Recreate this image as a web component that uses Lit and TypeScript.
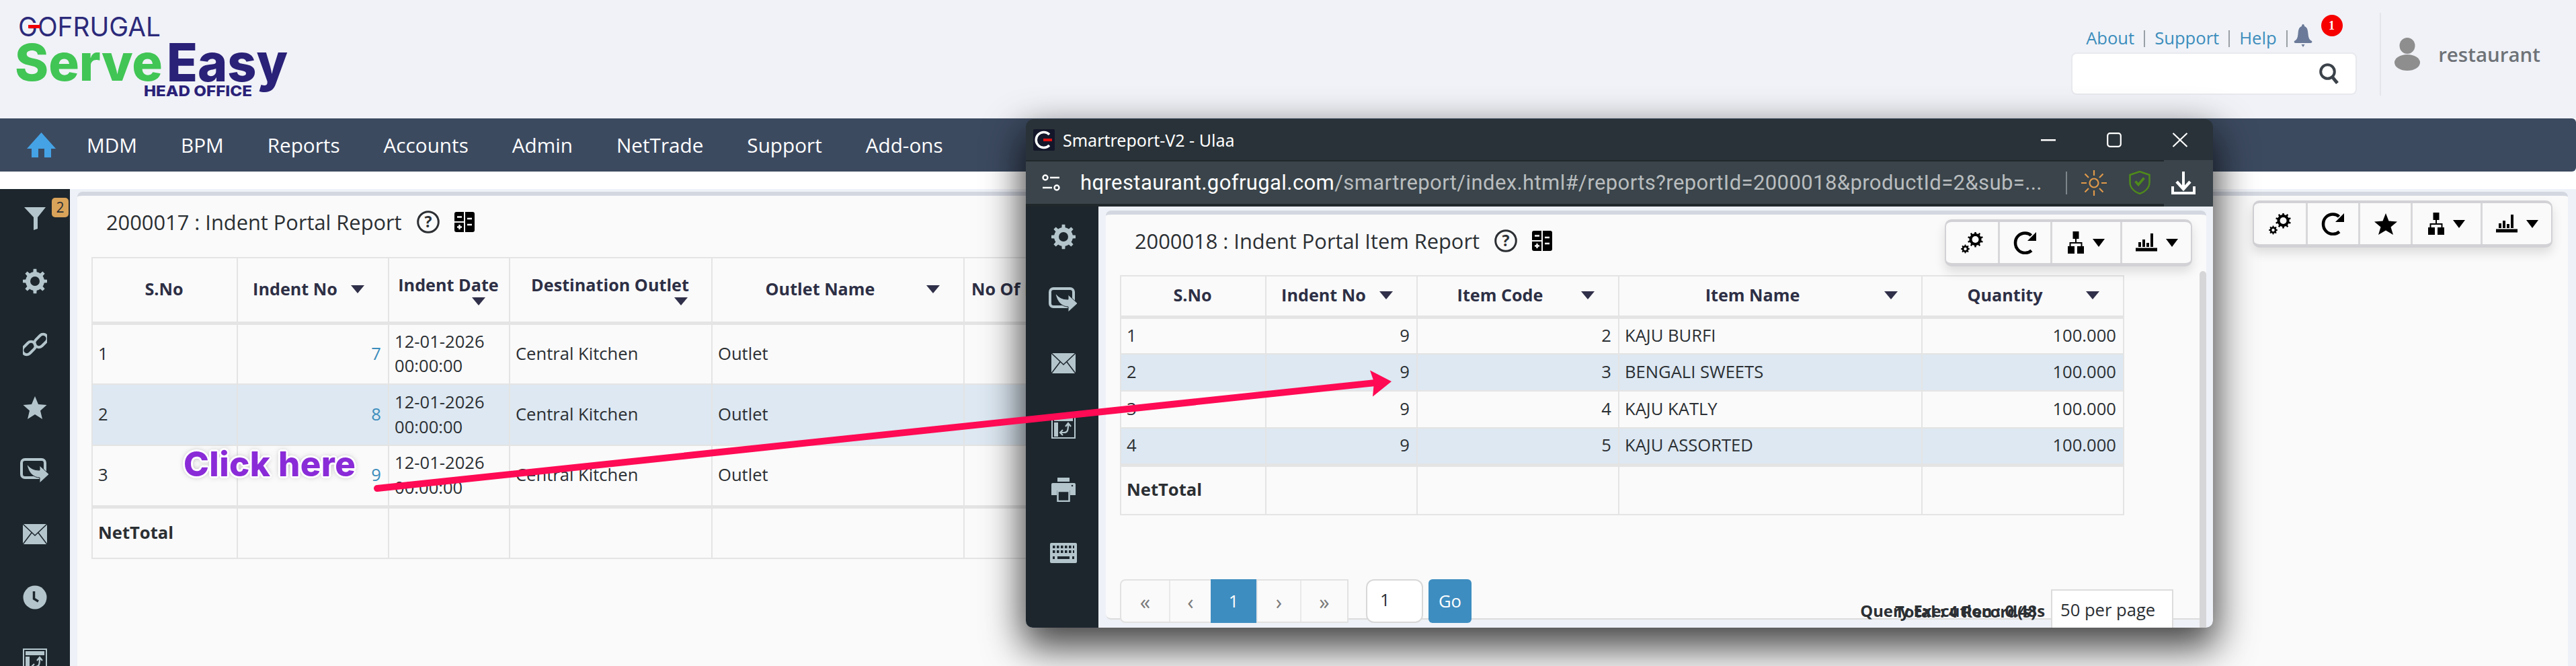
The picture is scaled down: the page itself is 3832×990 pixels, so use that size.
import { LitElement, html, css } from "lit";
import { customElement } from "lit/decorators.js";

const gear = (cx: number, cy: number, ro: number, ri: number, n: number) => {
  let d = "";
  const step = (Math.PI * 2) / n;
  for (let i = 0; i < n; i++) {
    const a = i * step - Math.PI / 2;
    const pts: [number, number][] = [
      [ri, a - step * 0.5],
      [ri, a - step * 0.24],
      [ro, a - step * 0.16],
      [ro, a + step * 0.16],
      [ri, a + step * 0.24],
    ];
    for (const [r, t] of pts) {
      d += `${i === 0 && t === a - step * 0.5 ? "M" : "L"}${(cx + r * Math.cos(t)).toFixed(2)} ${(cy + r * Math.sin(t)).toFixed(2)}`;
    }
  }
  return d + "Z";
};

const DARK = "#1d262d";
const IC = "#b4c6cc";

const icons: Record<string, unknown> = {
  filter: html`<svg width="34" height="36" viewBox="0 0 34 36"><path d="M1 2H33L21 17V34L15 36V17Z" fill="${IC}"/></svg>`,
  gear: html`<svg width="36" height="38" viewBox="0 0 36 38"><path d="${gear(18, 19, 18.5, 14, 8)}" fill="${IC}"/><circle cx="18" cy="19" r="7" fill="${DARK}"/></svg>`,
  link: html`<svg width="36" height="38" viewBox="0 0 36 38" fill="none" stroke="${IC}" stroke-width="4"><rect x="-2" y="18" width="22" height="13" rx="6.5" transform="rotate(-45 9 24.5)"/><rect x="16" y="7" width="22" height="13" rx="6.5" transform="rotate(-45 27 13.5)"/></svg>`,
  star: html`<svg width="36" height="36" viewBox="0 0 36 36"><path d="M18 1L23 13L35.500 14L26 22.500L29 35L18 28L7 35L10 22.500L.5 14L13 13Z" fill="${IC}"/></svg>`,
  share: html`<svg width="44" height="38" viewBox="0 0 44 38"><rect x="2" y="2" width="35" height="27" rx="5" fill="none" stroke="${IC}" stroke-width="4"/><path d="M10 9C15 15 20 18 29 18V11L43 24L29 37V29C20 29 12 22 10 9Z" fill="${IC}" stroke="${DARK}" stroke-width="1"/></svg>`,
  mail: html`<svg width="36" height="30" viewBox="0 0 36 30"><rect width="36" height="30" fill="${IC}"/><path d="M0 0L18 17L36 0M0 30L13 13M36 30L23 13" fill="none" stroke="${DARK}" stroke-width="1.600"/></svg>`,
  clock: html`<svg width="36" height="36" viewBox="0 0 36 36"><circle cx="18" cy="18" r="17.500" fill="${IC}"/><path d="M16.500 9V20L23 24" fill="none" stroke="${DARK}" stroke-width="3.500"/></svg>`,
  chart: html`<svg width="36" height="36" viewBox="0 0 36 36"><rect x="1" y="1" width="34" height="34" fill="none" stroke="${IC}" stroke-width="2"/><rect x="4" y="4" width="28" height="6" fill="${IC}"/><rect x="4" y="12" width="6" height="21" fill="${IC}"/><path d="M14 27H19C24 27 25 24 25 14M21 18L25 13L29 18M17 23L13 27L17 31" fill="none" stroke="${IC}" stroke-width="2.200"/></svg>`,
  print: html`<svg width="36" height="36" viewBox="0 0 36 36"><rect x="9" y="0" width="18" height="6" fill="${IC}"/><path d="M2 8H34Q36 8 36 10V26H28V19H8V26H0V10Q0 8 2 8Z" fill="${IC}"/><rect x="9.500" y="20" width="17" height="15" fill="${DARK}" stroke="${IC}" stroke-width="2.500"/><circle cx="31" cy="12" r="1.300" fill="${DARK}"/></svg>`,
  keyboard: html`<svg width="40" height="30" viewBox="0 0 40 30"><rect width="40" height="30" rx="2" fill="${IC}"/><path d="M4 6H36M4 13H36" stroke="${DARK}" stroke-width="4" stroke-dasharray="3.500 2.500"/><path d="M11 22H29" stroke="${DARK}" stroke-width="4"/><path d="M4 22H7M33 22H36" stroke="${DARK}" stroke-width="4"/></svg>`,
};

const toolIcons: Record<string, unknown> = {
  gears: html`<svg width="34" height="32" viewBox="0 0 34 32"><path fill-rule="evenodd" d="${gear(21.500, 11, 11.500, 9, 10)}" fill="#000"/><circle cx="21.500" cy="11" r="5" fill="#fafafa"/><path d="${gear(6.500, 25, 6.500, 5, 8)}" fill="#000"/><circle cx="6.500" cy="25" r="2.200" fill="#fafafa"/></svg>`,
  refresh: html`<svg width="36" height="34" viewBox="0 0 36 34"><path d="M27 28.500C24 31 21 32 17.500 32C9 32 3 25 3 17S9 2.500 17.500 2.500C21 2.500 24 3.500 26.500 6" fill="none" stroke="#000" stroke-width="4.500"/><path d="M34 1V14H21Z" fill="#000"/></svg>`,
  star: html`<svg width="34" height="32" viewBox="0 0 34 32"><path d="M17 0L21.500 11.500L34 12.500L24.500 20.500L28 32L17 25.500L6 32L9.500 20.500L0 12.500L12.500 11.500Z" fill="#000"/></svg>`,
  tree: html`<svg width="24" height="33" viewBox="0 0 24 33"><rect x="7.500" y="0" width="9" height="11" fill="#000"/><path d="M12 11V17M3.500 23V17H20.500V23" fill="none" stroke="#000" stroke-width="2"/><rect x="0" y="22" width="10" height="11" fill="#000"/><rect x="14" y="22" width="10" height="11" fill="#000"/></svg>`,
  bars: html`<svg width="32" height="27" viewBox="0 0 32 27"><path d="M0 24H32" stroke="#000" stroke-width="5"/><rect x="4" y="13" width="4" height="7" fill="#000"/><rect x="10" y="9" width="4" height="11" fill="#000"/><rect x="16" y="14" width="4" height="6" fill="#000"/><rect x="22" y="0" width="4" height="20" fill="#000"/></svg>`,
};

const helpIcon = html`<svg width="34" height="34" viewBox="0 0 34 34"><circle cx="17" cy="17" r="15.300" fill="none" stroke="#2c2f33" stroke-width="3"/><text x="17" y="25" text-anchor="middle" font-family="Open Sans" font-weight="700" font-size="23" fill="#2c2f33">?</text></svg>`;
const calcIcon = html`<svg width="30" height="30" viewBox="0 0 30 30"><rect width="30" height="30" rx="3" fill="#000"/><path d="M15 0V30M0 15H14" stroke="#fafafa" stroke-width="2"/><path d="M4 7.500H11M19 10H26M19 19H26M4 22.500H11M7.500 19V26" stroke="#fafafa" stroke-width="2.400"/></svg>`;

type Col = { w: number; label: string; caret?: boolean; left?: boolean };
const mainCols: Col[] = [
  { w: 216, label: "S.No" },
  { w: 225, label: "Indent No", caret: true },
  { w: 180, label: "Indent Date", caret: true },
  { w: 301, label: "Destination Outlet", caret: true },
  { w: 375, label: "Outlet Name", caret: true },
  { w: 300, label: "No Of Items", left: true },
];
const popCols: Col[] = [
  { w: 216, label: "S.No" },
  { w: 225, label: "Indent No", caret: true },
  { w: 300, label: "Item Code", caret: true },
  { w: 451, label: "Item Name", caret: true },
  { w: 300, label: "Quantity", caret: true },
];
const mainRows = [7, 8, 9];
const popRows = [
  [1, 9, 2, "KAJU BURFI", "100.000"],
  [2, 9, 3, "BENGALI SWEETS", "100.000"],
  [3, 9, 4, "KAJU KATLY", "100.000"],
  [4, 9, 5, "KAJU ASSORTED", "100.000"],
];

@customElement("app-root")
export class AppRoot extends LitElement {
  static styles = css`
    :host {
      display: block;
      position: relative;
      width: 3832px;
      height: 990px;
      overflow: hidden;
      background: #fff;
      font-family: "Open Sans", "Noto Sans", sans-serif;
      font-size: 25.6px;
      color: #2b2f33;
    }
    .top {
      height: 176px;
      background: #f0f2f7;
      display: flex;
      justify-content: space-between;
    }
    .logo { display: block; }
    .top-right { display: flex; padding-right: 53px; }
    .tools { width: 425px; padding-top: 36px; }
    .links {
      display: flex;
      align-items: center;
      height: 42px;
      padding-left: 22px;
      position: relative;
      color: #3c8dbc;
      line-height: 36px;
    }
    .links i { width: 2px; height: 25px; background: #9aa0a6; margin: 0 14px; }
    .links i:nth-of-type(3) { margin-right: 9px; }
    .bell { position: relative; display: flex; margin-top: -8px; }
    .bell-badge {
      position: absolute;
      left: 41px;
      top: -14px;
      width: 32px;
      height: 32px;
      border-radius: 50%;
      background: #f60000;
      color: #fff;
      font: 700 18px "Liberation Serif", serif;
      display: flex;
      align-items: center;
      justify-content: center;
    }
    .search {
      height: 63px;
      box-sizing: border-box;
      background: #fff;
      border: 2px solid #e8e9ee;
      border-radius: 8px;
      display: flex;
      align-items: center;
      justify-content: flex-end;
      padding-right: 24px;
    }
    .user {
      margin: 19px 0 34px 34px;
      border-left: 2px solid #e3e5ea;
      padding-left: 20px;
      display: flex;
      align-items: center;
      gap: 27px;
      font-size: 29.500px;
      font-weight: 600;
      color: #6e7277;
    }
    .nav {
      height: 79px;
      background: #3c4a60;
      border-radius: 0 6px 6px 0;
      display: flex;
      align-items: center;
      padding-left: 40px;
      color: #fff;
      font-size: 29.700px;
    }
    .nav svg { margin-right: 46px; }
    .nav span { margin-right: 65px; }
    .band { height: 26px; background: #fff; }
    .body { display: flex; height: 709px; }
    .side {
      width: 104px;
      flex: none;
      background: #1d262d;
      display: flex;
      flex-direction: column;
      gap: 8px;
    }
    .side-item {
      position: relative;
      height: 86px;
      flex: none;
      display: flex;
      align-items: center;
      justify-content: center;
    }
    .badge {
      position: absolute;
      left: 77px;
      top: 13px;
      width: 25px;
      height: 29px;
      background: #d9a35a;
      border-radius: 5px;
      color: #2b2f33;
      font-size: 21px;
      line-height: 29px;
      text-align: center;
    }
    .panel {
      flex: 1;
      min-width: 0;
      background: #eef1f7;
      padding: 4px 12px 0 11px;
      position: relative;
    }
    .card {
      background: #fafafa;
      border-top: 6px solid #d3d7e0;
      border-radius: 8px 8px 0 0;
      height: 800px;
      box-sizing: border-box;
      padding: 0 23px 0 21px;
    }
    .head {
      display: flex;
      justify-content: space-between;
      align-items: flex-start;
      height: 91px;
    }
    .title {
      display: flex;
      align-items: center;
      gap: 22px;
      padding: 17px 0 0 22px;
      font-size: 30.800px;
      line-height: 44px;
      color: #2b2f33;
    }
    .toolbar {
      margin-top: 7px;
      display: flex;
      height: 70px;
      box-sizing: border-box;
      background: #fafafa;
      border: 4px solid #d2d2d6;
      border-width: 4px 2px 5px 2px;
      border-radius: 10px;
      box-shadow: 0 8px 16px rgba(0, 0, 0, 0.12);
    }
    .tb {
      box-sizing: border-box;
      display: flex;
      align-items: center;
      justify-content: center;
      gap: 13px;
      border-left: 3px solid #d8d8db;
    }
    .tb:first-child { border-left: 0; }
    .w1 { width: 77px; }
    .w2 { width: 78px; }
    .w3 { width: 104px; }
    .w4 { width: 105px; }
    .caret {
      flex: none;
      width: 0;
      height: 0;
      border-left: 10px solid transparent;
      border-right: 10px solid transparent;
      border-top: 12px solid #30304a;
    }
    .tb .caret { border-top-color: #000; border-left-width: 9px; border-right-width: 9px; }
    table {
      border-collapse: collapse;
      table-layout: fixed;
      background: #fafafa;
    }
    th, td {
      border: 2px solid #e4e4e4;
      padding: 0 10px 0 8px;
      line-height: 36.600px;
      box-sizing: border-box;
      overflow: hidden;
    }
    td { white-space: nowrap; }
    td.wrap { white-space: normal; }
    th {
      font-weight: 700;
      color: #2d2f45;
      font-size: 25.200px;
      border-bottom-width: 5px;
      padding-bottom: 2px;
    }
    .thi {
      display: flex;
      flex-wrap: wrap;
      align-items: center;
      justify-content: flex-end;
    }
    .thi span { flex: 1 0 auto; text-align: center; }
    .thi.lft span { text-align: left; white-space: nowrap; padding-left: 2px; }
    .thi .caret { margin: 0 25px 0 6px; }
    .r { text-align: right; }
    .lnk { color: #3c8dbc; }
    .hl td { background: #dde8f2; }
    tfoot td { border-top-width: 5px; font-weight: 700; }
    .main-table th { height: 97px; }
    .main-table tbody tr { height: 91px; }
    .main-table tfoot tr { height: 77px; }
    .pop-table th { height: 61px; }
    .pop-table tbody tr { height: 55px; }
    .pop-table tfoot tr { height: 74px; }

    .window {
      position: absolute;
      left: 1526px;
      top: 177px;
      width: 1766px;
      height: 756px;
      background: #293238;
      border-radius: 12px 12px 10px 10px;
      overflow: hidden;
      display: flex;
      flex-direction: column;
    }
    .window-shadow {
      position: absolute;
      left: 1526px;
      top: 177px;
      width: 1766px;
      height: 756px;
      border-radius: 12px;
      box-shadow: 0 24px 56px 6px rgba(0, 0, 0, 0.72);
    }
    .w-title {
      height: 61px;
      flex: none;
      display: flex;
      align-items: center;
      padding-left: 11px;
      color: #fff;
      font-family: "Noto Sans", sans-serif;
      font-size: 25px;
      gap: 12px;
    }
    .w-ctrl { margin-left: auto; display: flex; align-items: center; gap: 0; }
    .w-ctrl div { width: 98px; display: flex; justify-content: center; }
    .w-url { height: 69px; flex: none; display: flex; background: #3a444a; }
    .url-main {
      flex: 1;
      box-sizing: border-box;
      border-top: 2px solid #20282c;
      border-bottom: 4px solid #20282c;
      display: flex;
      align-items: center;
      padding-left: 24px;
    }
    .url-text {
      margin-left: 30px;
      width: 1442px;
      flex: none;
      white-space: nowrap;
      font: 31px Roboto, sans-serif;
      color: #b9bdbf;
      letter-spacing: 0.4px;
    }
    .url-text b { color: #fff; font-weight: 400; }
    .url-sep { width: 2px; height: 34px; background: #7d868b; margin: 0 21px 0 24px; }
    .url-right { width: 73px; flex: none; display: flex; align-items: center; padding-left: 11px; box-sizing: border-box; }
    .w-body { flex: 1; min-height: 0; display: flex; background: #eef1f7; }
    .w-side {
      width: 108px;
      flex: none;
      background: #1d262d;
      display: flex;
      flex-direction: column;
      gap: 4px;
      padding-left: 4px;
      box-sizing: border-box;
    }
    .w-side .side-item { height: 90px; }
    .w-panel {
      flex: 1;
      min-width: 0;
      position: relative;
      padding: 6px 10px 0 11px;
    }
    .w-card {
      background: #fafafa;
      border-top: 6px solid #d3d7e0;
      border-bottom: 2px solid #dcdcdc;
      border-radius: 8px;
      height: 608px;
      box-sizing: border-box;
      padding: 0 21px 0 21px;
      position: relative;
    }
    .w-card .head { height: 90px; padding-right: 0; }
    .w-card .title { padding-left: 22px; }
    .scroll {
      position: absolute;
      right: 10px;
      top: 96px;
      bottom: 0;
      width: 10px;
      background: #d6d6d8;
      border-radius: 5px 5px 0 0;
    }
    .foot {
      display: flex;
      margin-top: 95px;
      position: relative;
    }
    .pager {
      display: flex;
      height: 65px;
      box-sizing: border-box;
      border: 2px solid #e2e2e2;
      border-radius: 8px 0 0 8px;
      background: #fafafa;
      color: #7b7b7b;
      font-size: 31px;
    }
    .pager div {
      display: flex;
      align-items: center;
      justify-content: center;
      border-left: 2px solid #e9e9e9;
      box-sizing: border-box;
    }
    .pager div:first-child { border-left: 0; }
    .pager .on { background: #3e8dc0; color: #fff; border: 0; margin: -2px 0; font-size: 25.6px; }
    .goto {
      width: 85px;
      height: 65px;
      box-sizing: border-box;
      margin-left: 26px;
      background: #fff;
      border: 2px solid #d8d8d8;
      border-radius: 12px;
      padding-left: 19px;
      line-height: 58px;
    }
    .go {
      width: 64px;
      height: 65px;
      margin-left: 8px;
      background: #3e8dc0;
      color: #fff;
      border-radius: 6px;
      display: flex;
      align-items: center;
      justify-content: center;
    }
    .stats {
      position: absolute;
      right: 219px;
      top: 29px;
      font-size: 23.800px;
      font-weight: 700;
      color: #2b2f33;
      white-space: nowrap;
      line-height: 36px;
    }
    .stats.two { right: 232px; top: 30px; }
    .sel {
      position: absolute;
      right: 28px;
      top: 15px;
      width: 182px;
      height: 80px;
      box-sizing: border-box;
      background: #fff;
      border: 2px solid #dcdcdc;
      padding: 11px 0 0 12px;
      line-height: 36px;
    }
    .overlay { position: absolute; left: 0; top: 0; pointer-events: none; }
    .click {
      position: absolute;
      left: 273px;
      top: 660px;
      font: 800 51px/60px Inter, sans-serif;
      letter-spacing: 0.4px;
      color: #8a2bd8;
      white-space: nowrap;
      text-shadow:
        2px 2px 0 #fff, -2px 2px 0 #fff, 2px -2px 0 #fff, -2px -2px 0 #fff,
        0 3px 0 #fff, 0 -3px 0 #fff, 3px 0 0 #fff, -3px 0 0 #fff,
        0 0 9px rgba(60, 60, 60, 0.55);
    }
  `;

  private table(cols: Col[], cls: string, body: unknown, footCells: number) {
    return html`<table class="${cls}" style="width:${cols.reduce((a, c) => a + c.w, 0)}px">
      <colgroup>${cols.map((c) => html`<col style="width:${c.w}px" />`)}</colgroup>
      <thead>
        <tr>
          ${cols.map(
            (c) => html`<th>
              <div class="thi ${c.left ? "lft" : ""}">
                <span>${c.label}</span>${c.caret ? html`<i class="caret"></i>` : ""}
              </div>
            </th>`,
          )}
        </tr>
      </thead>
      ${body}
      <tfoot>
        <tr>
          <td>NetTotal</td>
          ${Array.from({ length: footCells }, () => html`<td></td>`)}
        </tr>
      </tfoot>
    </table>`;
  }

  private logo() {
    return html`<svg class="logo" width="440" height="176" viewBox="0 0 440 176">
      <text x="27" y="54" font-family="Inter" font-size="40" font-weight="400" fill="#2c2a7a" textLength="212" lengthAdjust="spacingAndGlyphs">GOFRUGAL</text>
      <rect x="42" y="37" width="18" height="5" fill="#f00000" />
      <text x="22" y="120" font-family="Inter" font-size="76" font-weight="800" fill="#41c555" textLength="220" lengthAdjust="spacingAndGlyphs">Serve</text>
      <text x="248" y="121" font-family="Inter" font-size="78" font-weight="800" fill="#2a2178" textLength="180" lengthAdjust="spacingAndGlyphs">Easy</text>
      <text x="214" y="143" font-family="Inter" font-size="22" font-weight="800" fill="#2a2178" textLength="161" lengthAdjust="spacingAndGlyphs">HEAD OFFICE</text>
    </svg>`;
  }

  private toolbar(withStar: boolean) {
    return html`<div class="toolbar">
      <div class="tb w1">${toolIcons.gears}</div>
      <div class="tb w2">${toolIcons.refresh}</div>
      ${withStar ? html`<div class="tb w2">${toolIcons.star}</div>` : ""}
      <div class="tb w3">${toolIcons.tree}<i class="caret"></i></div>
      <div class="tb w4">${toolIcons.bars}<i class="caret"></i></div>
    </div>`;
  }

  render() {
    const nav = ["MDM", "BPM", "Reports", "Accounts", "Admin", "NetTrade", "Support", "Add-ons"];
    const sideMain = ["filter", "gear", "link", "star", "share", "mail", "clock", "chart"];
    const sidePop = ["gear", "share", "mail", "chart", "print", "keyboard"];
    return html`
      <div class="top">
        ${this.logo()}
        <div class="top-right">
          <div class="tools">
            <div class="links">
              <span>About</span><i></i><span>Support</span><i></i><span>Help</span><i></i>
              <div class="bell">
                <svg width="28" height="34" viewBox="0 0 28 34"><path d="M14 0C12.500 0 12 1.500 12 3C7.500 4.500 7 9 6.500 14C6 20 5 23 1 25C0 26 1 28 3 28H25C27 28 28 26 27 25C23 23 22 20 21.500 14C21 9 20.500 4.500 16 3C16 1.500 15.500 0 14 0Z" fill="#6b7a99"/><path d="M11.500 30H16.500L14 34Z" fill="#6b7a99"/></svg>
                <div class="bell-badge">1</div>
              </div>
            </div>
            <div class="search">
              <svg width="30" height="31" viewBox="0 0 30 31"><circle cx="12.500" cy="12.500" r="10.300" fill="none" stroke="#3a4149" stroke-width="4"/><path d="M19.500 20.500L27 29.500" stroke="#3a4149" stroke-width="5"/></svg>
            </div>
          </div>
          <div class="user">
            <svg width="38" height="49" viewBox="0 0 38 49"><ellipse cx="19" cy="12" rx="11.500" ry="12" fill="#8e8e8e"/><ellipse cx="19" cy="37" rx="19" ry="12" fill="#8e8e8e"/></svg>
            <span>restaurant</span>
          </div>
        </div>
      </div>
      <div class="nav">
        <svg width="43" height="37" viewBox="0 0 43 37"><path d="M21.500 0L43 24H36V37H26V24H17V37H7V24H0Z" fill="#45a3e5"/></svg>
        ${nav.map((n) => html`<span>${n}</span>`)}
      </div>
      <div class="band"></div>
      <div class="body">
        <div class="side">
          ${sideMain.map(
            (n) => html`<div class="side-item">${icons[n]}${n === "filter" ? html`<div class="badge">2</div>` : ""}</div>`,
          )}
        </div>
        <div class="panel">
          <div class="card">
            <div class="head">
              <div class="title"><span>2000017 : Indent Portal Report</span>${helpIcon}${calcIcon}</div>
              ${this.toolbar(true)}
            </div>
            ${this.table(
              mainCols,
              "main-table",
              html`<tbody>
                ${mainRows.map(
                  (v, i) => html`<tr class="${i === 1 ? "hl" : ""}">
                    <td>${i + 1}</td>
                    <td class="r lnk">${v}</td>
                    <td class="wrap">12-01-2026 00:00:00</td>
                    <td>Central Kitchen</td>
                    <td>Outlet</td>
                    <td></td>
                  </tr>`,
                )}
              </tbody>`,
              5,
            )}
          </div>
        </div>
      </div>

      <div class="window-shadow"></div>
      <div class="window">
        <div class="w-title">
          <svg width="32" height="32" viewBox="0 0 32 32"><rect width="32" height="32" rx="2" fill="#14162a"/><path d="M24 8A11.500 11.500 0 1 0 24 24" fill="none" stroke="#fff" stroke-width="3.500"/><rect x="15" y="14" width="13" height="4" fill="#e01010"/></svg>
          <span>Smartreport-V2 - Ulaa</span>
          <div class="w-ctrl">
            <div><svg width="22" height="4"><rect width="22" height="2.500" y="1" fill="#fff"/></svg></div>
            <div><svg width="22" height="22" viewBox="0 0 22 22"><rect x="1.200" y="1.200" width="19.600" height="19.600" rx="3.500" fill="none" stroke="#fff" stroke-width="2.200"/></svg></div>
            <div><svg width="24" height="22" viewBox="0 0 24 22"><path d="M1.500 1L22.500 21M22.500 1L1.500 21" stroke="#fff" stroke-width="2.200"/></svg></div>
          </div>
        </div>
        <div class="w-url">
          <div class="url-main">
            <svg width="27" height="26" viewBox="0 0 27 26" fill="none" stroke="#fff" stroke-width="2.400"><circle cx="5" cy="5" r="3.500"/><path d="M12 5H26M1 20H15"/><circle cx="22" cy="20" r="3.500"/></svg>
            <div class="url-text"><b>hqrestaurant.gofrugal.com</b>/smartreport/index.html#/reports?reportId=2000018&amp;productId=2&amp;sub=...</div>
            <div class="url-sep"></div>
            <svg width="38" height="38" viewBox="0 0 38 38" fill="none" stroke="#e0994a" stroke-width="2.200"><circle cx="19" cy="19" r="6.500"/><path d="M19 0V8M19 30V38M0 19H8M30 19H38M5.500 5.500L11 11M27 27L32.500 32.500M5.500 32.500L11 27M27 11L32.500 5.500"/></svg>
            <svg style="margin-left:33px" width="32" height="35" viewBox="0 0 32 35"><path d="M16 1L30.500 6V17C30.500 25 24 31 16 34C8 31 1.500 25 1.500 17V6Z" fill="none" stroke="#4f8a1b" stroke-width="2.500"/><path d="M9.500 15.500L14 20.500L22.500 10.500" fill="none" stroke="#4f8a1b" stroke-width="3.500"/></svg>
          </div>
          <div class="url-right">
            <svg width="36" height="35" viewBox="0 0 36 35" fill="none" stroke="#fff" stroke-width="4"><path d="M2 22V32H34V22"/><path d="M18 0V24" /><path d="M8 15L18 26L28 15" stroke-width="4.500"/></svg>
          </div>
        </div>
        <div class="w-body">
          <div class="w-side">${sidePop.map((n) => html`<div class="side-item">${icons[n]}</div>`)}</div>
          <div class="w-panel">
            <div class="w-card">
              <div class="head">
                <div class="title"><span>2000018 : Indent Portal Item Report</span>${helpIcon}${calcIcon}</div>
                ${this.toolbar(false)}
              </div>
              ${this.table(
                popCols,
                "pop-table",
                html`<tbody>
                  ${popRows.map(
                    (r, i) => html`<tr class="${i % 2 ? "hl" : ""}">
                      <td>${r[0]}</td>
                      <td class="r">${r[1]}</td>
                      <td class="r">${r[2]}</td>
                      <td>${r[3]}</td>
                      <td class="r">${r[4]}</td>
                    </tr>`,
                  )}
                </tbody>`,
                4,
              )}
              <div class="foot">
                <div class="pager">
                  <div style="width:71px">«</div>
                  <div style="width:62px">‹</div>
                  <div class="on" style="width:68px">1</div>
                  <div style="width:65px">›</div>
                  <div style="width:70px">»</div>
                </div>
                <div class="goto">1</div>
                <div class="go">Go</div>
                <div class="stats">Query Execution : 0.48s</div>
                <div class="stats two">Total : 4 Record(s)</div>
                <div class="sel">50 per page</div>
              </div>
            </div>
            <div class="scroll"></div>
          </div>
        </div>
      </div>

      <svg class="overlay" width="3832" height="990" viewBox="0 0 3832 990">
        <path d="M561 726L2046 569" stroke="#ff0a54" stroke-width="10" stroke-linecap="round" fill="none" />
        <path d="M2070 567L2038 550.500L2044 568L2042 589.500Z" fill="#ff0a54" />
      </svg>
      <div class="click">Click here</div>
    `;
  }
}
